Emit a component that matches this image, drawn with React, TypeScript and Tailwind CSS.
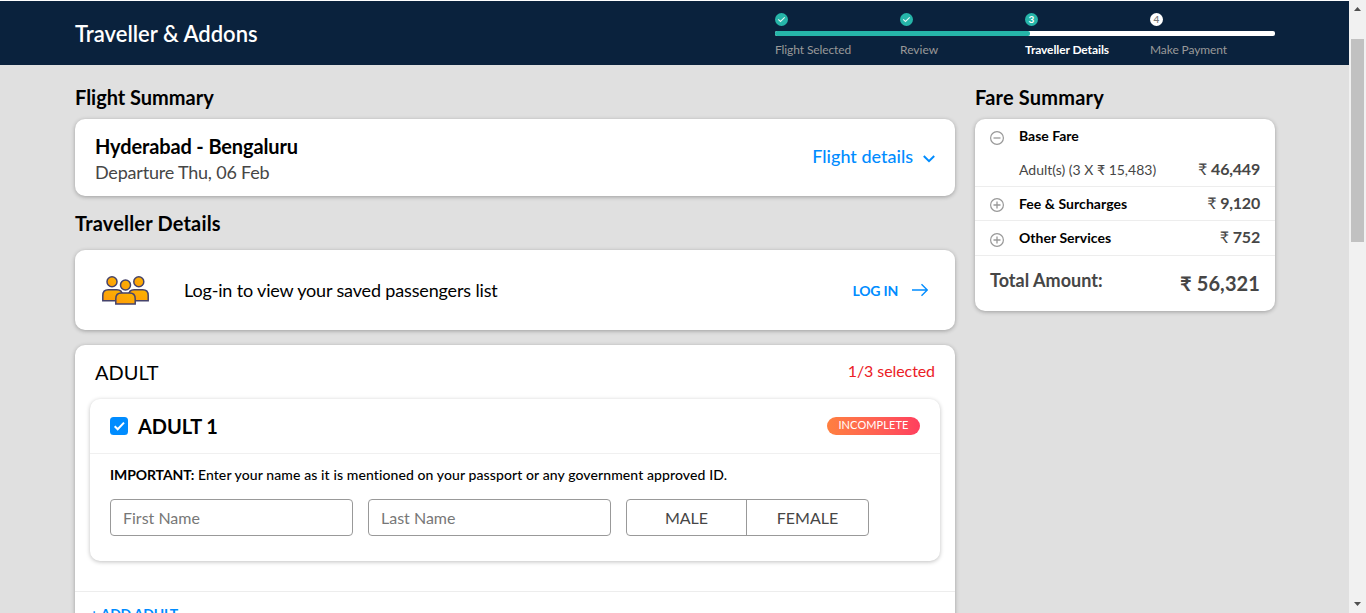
import React from "react";

function StepDone() {
  return (
    <svg width="13" height="13" viewBox="0 0 13 13" className="block">
      <circle cx="6.5" cy="6.5" r="6.5" fill="#26b5a9" />
      <path d="M3.2 6.3 5.500 8.500 9.700 4.400" fill="none" stroke="#e4f6f4" strokeWidth="1.1" />
    </svg>
  );
}

function StepNumber({ n, className }: { n: number; className: string }) {
  return (
    <div className={`flex h-[13px] w-[13px] items-center justify-center rounded-full text-[10px] leading-[13px] ${className}`}>
      {n}
    </div>
  );
}

const steps = [
  { label: "Flight Selected", icon: <StepDone />, text: "text-[#999] tracking-[-0.1px]" },
  { label: "Review", icon: <StepDone />, text: "text-[#999]" },
  { label: "Traveller Details", icon: <StepNumber n={3} className="bg-[#26b5a9] font-bold text-white" />, text: "font-bold text-white tracking-[-0.1px]" },
  { label: "Make Payment", icon: <StepNumber n={4} className="bg-white font-semibold text-[#777]" />, text: "text-[#999] tracking-[-0.1px]" },
];

function Header() {
  return (
    <header className="flex h-[65px] border-t border-white bg-[#0a223d] pl-[75px]">
      <h1 className="w-[700px] text-[22px] leading-[65px] font-semibold text-white">Traveller &amp; Addons</h1>
      <div className="w-[500px] pt-[12px]">
        <div className="grid grid-cols-4">
          {steps.map((s) => (
            <div key={s.label}>{s.icon}</div>
          ))}
        </div>
        <div className="mt-[5px] h-[5px] overflow-hidden rounded-[2px] bg-white">
          <div className="h-full w-[255px] rounded-r-[2px] bg-[#26b5a9]" />
        </div>
        <div className="mt-[6px] grid grid-cols-4 text-[12px] leading-[16px]">
          {steps.map((s) => (
            <div key={s.label} className={`whitespace-nowrap ${s.text}`}>{s.label}</div>
          ))}
        </div>
      </div>
    </header>
  );
}

function Toggle({ open }: { open: boolean }) {
  return (
    <svg width="14" height="14" viewBox="0 0 14 14" fill="none" stroke="#999" className="mr-[15px] block shrink-0">
      <circle cx="7" cy="7" r="6.4" strokeWidth="1.2" />
      <path d={open ? "M3.5 7h7" : "M3.5 7h7M7 3.5v7"} strokeWidth="1.3" />
    </svg>
  );
}

function PeopleIcon() {
  return (
    <svg width="47" height="29" viewBox="0 0 47 29" stroke="#45436b" strokeWidth="1.5" className="block">
      <defs>
        <linearGradient id="amber" x1="0" y1="1" x2="1" y2="0">
          <stop offset="0" stopColor="#ff9a0a" />
          <stop offset="1" stopColor="#fbb500" />
        </linearGradient>
      </defs>
      <g fill="url(#amber)">
        <circle cx="10" cy="5.8" r="5" />
        <circle cx="36.8" cy="5.8" r="5" />
        <path d="M.8 24.7V19.5q0-5.700 5.500-5.700h8.500q5.500 0 5.500 5.700v5.200z" />
        <path d="M26.700 24.700V19.500q0-5.700 5.500-5.700h8.500q5.500 0 5.500 5.700v5.200z" />
        <circle cx="23.500" cy="9" r="5" />
        <path d="M13.800 27.900V22.700q0-5.700 5.500-5.700h8.400q5.500 0 5.500 5.700v5.200z" />
      </g>
    </svg>
  );
}

function Price({ amount }: { amount: string }) {
  return (
    <span className="-mt-[2px] text-[16px] tracking-[-0.2px]">
      ₹ <b>{amount}</b>
    </span>
  );
}

function FareSummary() {
  return (
    <aside className="ml-[20px] w-[300px]">
      <h2 className="h-[54px] pt-[20px] text-[20px] leading-[25px] font-bold tracking-[0.2px] text-black">Fare Summary</h2>
      <div className="h-[192px] rounded-[10px] bg-white text-[14px] text-[#464646] shadow-[0_1px_4px_rgba(0,0,0,0.3)]">
        <div className="h-[68px] border-b border-[#ededed] px-[15px]">
          <div className="flex h-[34px] items-center pt-[3px]">
            <Toggle open />
            <span className="-mt-[5px] font-bold text-black">Base Fare</span>
          </div>
          <div className="flex h-[33px] items-center justify-between pl-[29px]">
            <span>Adult(s) (3 X ₹ 15,483)</span>
            <Price amount="46,449" />
          </div>
        </div>
        <div className="flex h-[34px] items-center border-b border-[#ededed] px-[15px]">
          <div className="pt-[3px]"><Toggle open={false} /></div>
          <span className="flex-1 font-bold tracking-[0.05px] text-black">Fee &amp; Surcharges</span>
          <Price amount="9,120" />
        </div>
        <div className="flex h-[35px] items-center border-b border-[#ededed] px-[15px]">
          <div className="pt-[4px]"><Toggle open={false} /></div>
          <span className="-mt-[2px] flex-1 font-bold tracking-[0.03px] text-black">Other Services</span>
          <Price amount="752" />
        </div>
        <div className="flex justify-between px-[15px]">
          <span className="pt-[11px] text-[18px] leading-[26px] font-bold tracking-[0.03px]">Total Amount:</span>
          <span className="pt-[13px] text-[20px] leading-[28px] font-bold tracking-[0.1px]">₹ 56,321</span>
        </div>
      </div>
    </aside>
  );
}

const field = "h-[37px] w-[243px] rounded-[4px] border border-[#999] text-[16px]";

function AdultCard() {
  return (
    <div className="ml-[15px] h-[162px] w-[850px] rounded-[10px] bg-white shadow-[0_1px_4px_rgba(0,0,0,0.25)]">
      <div className="flex h-[55px] items-center border-b border-[#f0f0f0] px-[20px]">
        <svg width="18" height="18" viewBox="0 0 18 18" className="block">
          <rect width="18" height="18" rx="3.500" fill="#008cff" />
          <path d="M4.700 9.300 7.700 12.300 14 5.600" fill="none" stroke="#fff" strokeWidth="2" />
        </svg>
        <span className="ml-[10px] flex-1 text-[20px] font-bold tracking-[-0.1px] text-black">ADULT 1</span>
        <span className="h-[18px] w-[93px] rounded-full bg-gradient-to-r from-[#ff7f3f] to-[#ff3e5e] text-center text-[11px] leading-[16px] tracking-[0.1px] text-white">
          INCOMPLETE
        </span>
      </div>
      <p className="h-[45px] pt-[11px] pl-[20px] text-[14px] leading-[20px] whitespace-nowrap text-black">
        <b className="tracking-[-0.1px]">IMPORTANT:</b>{" "}
        <span className="font-medium tracking-[0.1px]">Enter your name as it is mentioned on your passport or any government approved ID.</span>
      </p>
      <div className="flex gap-[15px] pl-[20px]">
        <input className={`${field} px-[12px] outline-none placeholder:text-[#777]`} placeholder="First Name" />
        <input className={`${field} px-[12px] outline-none placeholder:text-[#777]`} placeholder="Last Name" />
        <div className={`${field} flex text-center leading-[35px] text-[#464646]`}>
          <span className="w-[120px] border-r border-[#999]">MALE</span>
          <span className="flex-1">FEMALE</span>
        </div>
      </div>
    </div>
  );
}

export default function App() {
  return (
    <div className="flex h-[613px] w-full overflow-hidden bg-[#e0e0e0] font-['Lato',sans-serif]">
      <div className="h-full flex-1">
        <Header />
        <div className="flex pl-[75px]">
          <main className="w-[880px]">
            <h2 className="h-[54px] pt-[20px] text-[20px] leading-[25px] font-bold tracking-[-0.02px] text-black">Flight Summary</h2>
            <section className="flex h-[77px] items-start justify-between rounded-[10px] bg-white px-[20px] pt-[13px] shadow-[0_1px_4px_rgba(0,0,0,0.3)]">
              <div>
                <div className="pt-[1px] text-[20px] leading-[26px] font-bold tracking-[-0.13px] text-black">Hyderabad - Bengaluru</div>
                <div className="text-[18px] leading-[26px] tracking-[-0.2px] text-[#464646]">Departure Thu, 06 Feb</div>
              </div>
              <div className="flex items-center pt-[11px] text-[18px] leading-[26px] font-medium text-[#008cff]">
                Flight details
                <svg width="12" height="8" viewBox="0 0 12 8" className="mt-[5px] ml-[10px] block" fill="none" stroke="#008cff" strokeWidth="2">
                  <path d="M.8 1 6 6.200 11.200 1" />
                </svg>
              </div>
            </section>

            <h2 className="h-[54px] pt-[15px] text-[20px] leading-[25px] font-bold tracking-[0.18px] text-black">Traveller Details</h2>
            <section className="flex h-[80px] items-center rounded-[10px] bg-white pr-[27px] pl-[27px] shadow-[0_1px_4px_rgba(0,0,0,0.3)]">
              <PeopleIcon />
              <span className="ml-[35px] flex-1 text-[18px] tracking-[-0.155px] text-black">Log-in to view your saved passengers list</span>
              <span className="text-[14px] font-bold tracking-[-0.2px] text-[#008cff]">LOG IN</span>
              <svg width="16" height="14" viewBox="0 0 16 14" className="ml-[14px] block" fill="none" stroke="#008cff" strokeWidth="1.400">
                <path d="M0 7h15M9.500 1.200l5.800 5.800-5.800 5.800" />
              </svg>
            </section>

            <section className="mt-[15px] h-[300px] rounded-[10px] bg-white shadow-[0_1px_4px_rgba(0,0,0,0.3)]">
              <div className="flex h-[54px] justify-between px-[20px]">
                <span className="pt-[15px] text-[20px] leading-[25px] text-black">ADULT</span>
                <span className="pt-[16px] text-[16px] leading-[20px] tracking-[-0.08px] text-[#eb2026]">1/3 selected</span>
              </div>
              <AdultCard />
              <div className="mt-[30px] border-t border-[#ededed] pt-[12px] pl-[15px] text-[14px] leading-[20px] font-bold tracking-[-0.2px] text-[#008cff]">+ ADD ADULT</div>
            </section>
          </main>
          <FareSummary />
        </div>
      </div>
      <div className="flex h-full w-[17px] shrink-0 flex-col items-center bg-[#f1f1f1]">
        <svg width="7" height="4" viewBox="0 0 7 4" className="mt-[7px] block"><path d="M0 4 3.500 0 7 4z" fill="#505050" /></svg>
        <div className="mt-[28px] h-[203px] w-[13px] bg-[#c1c1c1]" />
        <svg width="7" height="4" viewBox="0 0 7 4" className="mt-auto mb-[7px] block"><path d="M0 0h7L3.500 4z" fill="#505050" /></svg>
      </div>
    </div>
  );
}
